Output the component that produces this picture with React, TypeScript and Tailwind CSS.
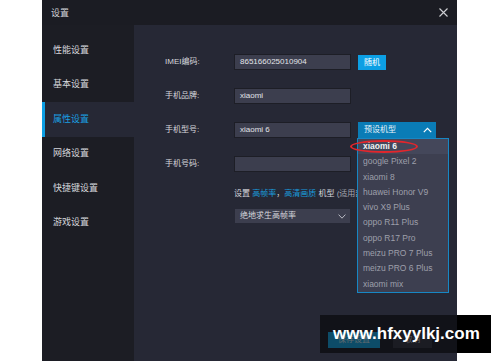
const models = [
  "xiaomi 6",
  "google Pixel 2",
  "xiaomi 8",
  "huawei Honor V9",
  "vivo X9 Plus",
  "oppo R11 Plus",
  "oppo R17 Pro",
  "meizu PRO 7 Plus",
  "meizu PRO 6 Plus",
  "xiaomi mix",
];

const menu = ["性能设置", "基本设置", "属性设置", "网络设置", "快捷键设置", "游戏设置"];

function Field({ label, value, children }: { label: string; value?: string; children?: React.ReactNode }) {
  return (
    <div className="flex h-[16px] items-center">
      <span className="w-[69px] text-[8px] leading-[16px] text-[#d6d7dc]">{label}</span>
      <div className="h-[16px] w-[117px] border border-[#1d1e26] bg-[#3c3e4e] pl-[5px] text-[8px] leading-[14px] text-[#e2e3e8]">
        {value}
      </div>
      {children}
    </div>
  );
}

export default function App() {
  return (
    <div className="relative h-[362px] w-[500px] overflow-hidden bg-white font-['Liberation_Sans','Noto_Sans_CJK_SC',sans-serif]">
      <div className="ml-[42px] flex h-[361px] w-[415px] flex-col">
        {/* title bar */}
        <div className="flex h-[25px] items-center justify-between bg-[#1b1c23] pl-[9px] pr-[9px]">
          <span className="text-[9px] leading-[12px] text-[#d2d3d8]">设置</span>
          <svg width="9" height="9" viewBox="0 0 9 9" className="text-[#cfd0d4]">
            <path d="M0.5 0.5 L8.5 8.5 M8.5 0.5 L0.5 8.5" stroke="currentColor" strokeWidth="1.1" />
          </svg>
        </div>

        <div className="flex flex-1">
          {/* sidebar */}
          <div className="w-[92px] bg-[#1c1d24] pt-[8px]">
            {menu.map((m, i) => (
              <div
                key={m}
                className={
                  i === 2
                    ? "flex h-[34.5px] items-center border-l-[3px] border-[#0c9fe4] bg-[#262835] pl-[8px] text-[9px] text-[#1a9fe0]"
                    : "flex h-[34.5px] items-center pl-[11px] text-[9px] text-[#d6d7dc]"
                }
              >
                {m}
              </div>
            ))}
          </div>

          {/* content */}
          <div className="flex flex-1 flex-col bg-[#262835] pl-[31px] pt-[29px]">
            <div className="flex flex-col gap-[18px]">
              <Field label="IMEI编码:" value="865166025010904">
                <button className="ml-[7px] h-[15px] w-[28px] bg-[#0c9fe4] text-[8px] leading-[15px] text-white">随机</button>
              </Field>
              <Field label="手机品牌:" value="xiaomi" />
              <Field label="手机型号:" value="xiaomi 6">
                <div className="relative ml-[7px]">
                  <div className="flex h-[16px] w-[78px] items-center justify-between bg-[#0a7cb6] pl-[6px] pr-[4px] text-[8px] text-[#e6f3fa]">
                    <span>预设机型</span>
                    <svg width="9" height="6" viewBox="0 0 9 6">
                      <path d="M0.8 5.2 L4.5 1.3 L8.2 5.2" stroke="#ffffff" strokeWidth="1.2" fill="none" />
                    </svg>
                  </div>
                  <div className="absolute left-[-1px] top-[16px] z-10 w-[92px] border border-[#1787c4] bg-[#3d3f50]">
                    {models.map((m, i) => (
                      <div
                        key={m}
                        className={
                          i === 0
                            ? "h-[15.3px] bg-[#44475a] pl-[5px] text-[8.5px] font-bold leading-[15.3px] text-[#f2f2f4]"
                            : "h-[15.3px] pl-[5px] text-[8.5px] leading-[15.3px] text-[#9d9fab]"
                        }
                      >
                        {m}
                      </div>
                    ))}
                  </div>
                  <div className="absolute left-[-8px] top-[18px] z-20 h-[13px] w-[68px] rounded-[50%] border-2 border-[#e3262c]" />
                </div>
              </Field>
              <Field label="手机号码:" />
            </div>

            <div className="ml-[69px] mt-[16px] whitespace-nowrap text-[8px] leading-[12px] text-[#d6d7dc]">
              设置 <span className="text-[#1a9ddf]">高帧率</span>，<span className="text-[#1a9ddf]">高清画质</span> 机型{" "}
              <span className="text-[#a4a6b0]">(适用部分游戏)</span>
            </div>

            <div className="ml-[70px] mt-[9px] flex h-[14px] w-[115px] items-center justify-between bg-[#3c3e4e] pl-[5px] pr-[4px] text-[8px] text-[#d6d7dc]">
              <span>绝地求生高帧率</span>
              <svg width="8" height="5" viewBox="0 0 8 5">
                <path d="M0.6 0.6 L4 4.2 L7.4 0.6" stroke="#b8bac4" strokeWidth="1" fill="none" />
              </svg>
            </div>

            <div className="mt-auto flex justify-end gap-[13px] pb-[13px] pr-[25px]">
              <button className="h-[16px] w-[52px] bg-[#1ea8e6] text-[8px] leading-[16px] text-[#d8eef8]">保存设置</button>
              <button className="h-[16px] w-[39px] bg-[#3c3e4e] text-[8px] leading-[16px] text-[#c8c9d0]">取消</button>
            </div>
          </div>
        </div>
      </div>

      {/* watermark */}
      <div className="absolute left-[320px] top-[315px] flex h-[38px] w-[171px]">
        <div className="w-[137px] bg-black/[0.55]" />
        <div className="flex-1 bg-black" />
        <span className="absolute left-[13px] top-0 text-[17px] font-bold leading-[38px] text-white">www.hfxyylkj.com</span>
      </div>
    </div>
  );
}
